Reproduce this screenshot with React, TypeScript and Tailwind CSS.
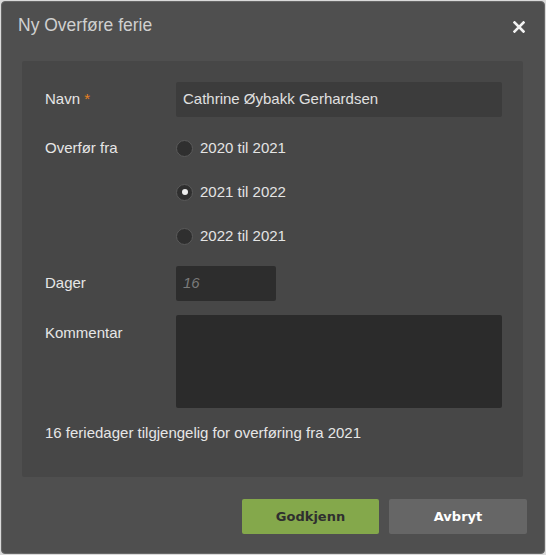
import React from 'react';

const years = [
  { id: 'a', label: '2020 til 2021', checked: false },
  { id: 'b', label: '2021 til 2022', checked: true },
  { id: 'c', label: '2022 til 2021', checked: false }
];

const Radio: React.FC<{ label: string; checked: boolean }> = ({ label, checked }) => (
  <div className="h-[44px] flex items-center">
    <span className="w-[17px] h-[17px] rounded-full bg-[#2f2f2f] border border-[#5a5a5a] flex items-center justify-center">
      {checked && <span className="w-[6px] h-[6px] rounded-full bg-[#eeeeee]" />}
    </span>
    <span className="ml-[7px] text-[15px] text-[#e4e4e4]">{label}</span>
  </div>
);

export default function App() {
  return (
    <div
      className="w-[546px] h-[555px] bg-[#dadada] pt-px pl-px"
      style={{ fontFamily: '"Liberation Sans", Arial, sans-serif' }}
    >
      <div className="w-[544px] h-[553px] bg-[#4f4f4f] border border-[#676767] rounded-[4px] flex flex-col">
        {/* Header */}
        <div className="h-[59px] flex items-center justify-between pl-[16px] pr-[19px] pb-[12px]">
          <h1 className="text-[17.5px] text-[#d0d0d0]">Ny Overføre ferie</h1>
          <svg width="12" height="12" viewBox="0 0 12 12" className="mt-[2px]">
            <path d="M1.5 1.5 L10.5 10.5 M10.5 1.5 L1.5 10.5" stroke="#f2f2f2" strokeWidth="2.6" strokeLinecap="square" />
          </svg>
        </div>

        {/* Form panel */}
        <div className="ml-[20px] w-[501px] bg-[#474747] rounded-[2px] pt-[21px] pb-[35px] pl-[23px] text-[15px] text-[#e6e6e6]">
          <div className="flex items-center h-[35px]">
            <div className="w-[131px]">
              Navn <span className="text-[#e8801f]">*</span>
            </div>
            <div className="w-[326px] h-[35px] bg-[#3c3c3c] rounded-[2px] flex items-center pl-[7px] text-[#e0e0e0]">
              Cathrine Øybakk Gerhardsen
            </div>
          </div>

          <div className="flex mt-[9px]">
            <div className="w-[131px] h-[44px] flex items-center">Overfør fra</div>
            <div className="flex flex-col">
              {years.map((y) => (
                <Radio key={y.id} label={y.label} checked={y.checked} />
              ))}
            </div>
          </div>

          <div className="flex items-center mt-[8px] h-[35px]">
            <div className="w-[131px]">Dager</div>
            <div className="w-[100px] h-[35px] bg-[#2d2d2d] rounded-[2px] flex items-center pl-[7px] italic text-[#7a7a7a]">
              16
            </div>
          </div>

          <div className="flex mt-[14px]">
            <div className="w-[131px] pt-[7px]">Kommentar</div>
            <div className="w-[326px] h-[93px] bg-[#2b2b2b] rounded-[2px]" />
          </div>

          <p className="mt-[16px] leading-[18px] text-[#e6e6e6]">
            16 feriedager tilgjengelig for overføring fra 2021
          </p>
        </div>

        {/* Footer */}
        <div
          className="flex justify-end gap-[10px] mt-[22px] pr-[17px]"
          style={{ fontFamily: '"DejaVu Sans", Verdana, sans-serif' }}
        >
          <button className="w-[137px] h-[35px] bg-[#84a84b] rounded-[2px] text-[13px] font-bold text-[#2f2f2f]">
            Godkjenn
          </button>
          <button className="w-[138px] h-[35px] bg-[#666666] rounded-[2px] text-[13px] font-bold text-white">
            Avbryt
          </button>
        </div>
      </div>
    </div>
  );
}
